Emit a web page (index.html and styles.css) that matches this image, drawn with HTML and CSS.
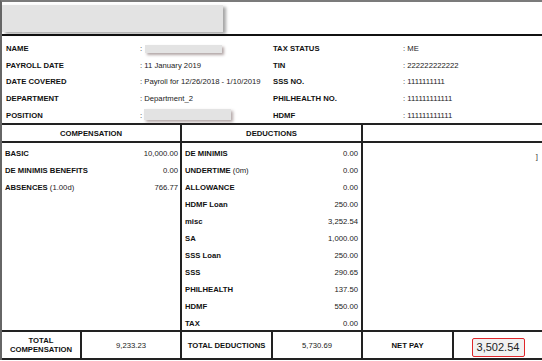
FILE: index.html
```html
<!DOCTYPE html>
<html>
<head>
<meta charset="utf-8">
<link rel="stylesheet" href="styles.css">
</head>
<body>
<div class="slip">
  <div class="head"><div class="title-box"></div></div>
  <div class="info">
    <div class="lbl">NAME</div><div class="val">: <span class="redact r-name"></span></div>
    <div class="lbl">TAX STATUS</div><div class="val">: ME</div>
    <div class="lbl">PAYROLL DATE</div><div class="val">: 11 January 2019</div>
    <div class="lbl">TIN</div><div class="val">: 222222222222</div>
    <div class="lbl">DATE COVERED</div><div class="val">: Payroll for 12/26/2018 - 1/10/2019</div>
    <div class="lbl">SSS NO.</div><div class="val">: 1111111111</div>
    <div class="lbl">DEPARTMENT</div><div class="val">: Department_2</div>
    <div class="lbl">PHILHEALTH NO.</div><div class="val">: 111111111111</div>
    <div class="lbl">POSITION</div><div class="val">: <span class="redact r-pos"></span></div>
    <div class="lbl">HDMF</div><div class="val">: 111111111111</div>
  </div>
  <div class="ledger">
    <div class="cols">
      <div class="hcell">COMPENSATION</div>
      <div class="hcell">DEDUCTIONS</div>
      <div class="hcell"></div>
      <div class="body comp">
        <div class="row"><span class="k">BASIC</span><span class="v">10,000.00</span></div>
        <div class="row"><span class="k">DE MINIMIS BENEFITS</span><span class="v">0.00</span></div>
        <div class="row"><span class="k">ABSENCES <span class="n">(1.00d)</span></span><span class="v">766.77</span></div>
      </div>
      <div class="body ded">
        <div class="row"><span class="k">DE MINIMIS</span><span class="v">0.00</span></div>
        <div class="row"><span class="k">UNDERTIME <span class="n">(0m)</span></span><span class="v">0.00</span></div>
        <div class="row"><span class="k">ALLOWANCE</span><span class="v">0.00</span></div>
        <div class="row"><span class="k">HDMF Loan</span><span class="v">250.00</span></div>
        <div class="row"><span class="k">misc</span><span class="v">3,252.54</span></div>
        <div class="row"><span class="k">SA</span><span class="v">1,000.00</span></div>
        <div class="row"><span class="k">SSS Loan</span><span class="v">250.00</span></div>
        <div class="row"><span class="k">SSS</span><span class="v">290.65</span></div>
        <div class="row"><span class="k">PHILHEALTH</span><span class="v">137.50</span></div>
        <div class="row"><span class="k">HDMF</span><span class="v">550.00</span></div>
        <div class="row"><span class="k">TAX</span><span class="v">0.00</span></div>
      </div>
      <div class="body extra"><div class="mark">]</div></div>
    </div>
    <div class="totals">
      <div class="tcell b two">TOTAL<br>COMPENSATION</div>
      <div class="tcell">9,233.23</div>
      <div class="tcell b">TOTAL DEDUCTIONS</div>
      <div class="tcell">5,730.69</div>
      <div class="tcell b">NET PAY</div>
      <div class="tcell net"><div class="netbox">3,502.54</div></div>
    </div>
  </div>
</div>
</body>
</html>
```
FILE: styles.css
```css
* { box-sizing: border-box; }
body {
  margin: 0;
  background: #fff;
  font-family: "Liberation Sans", Arial, sans-serif;
  font-size: 7.7px;
  color: #222;
}
.slip {
  width: 542px;
  border-top: 2px solid #7b7b7b;
  border-left: 2px solid #666;
}
.head {
  height: 34px;
  padding-top: 3px;
  border-bottom: 2px solid #111;
}
.title-box {
  width: 221px;
  height: 27px;
  background: #e3e3e3;
  box-shadow: 3px 2px 3px rgba(0, 0, 0, 0.35);
}
.info {
  height: 87px;
  padding: 4px 0 0 4px;
  display: grid;
  grid-template-columns: 134px 133px 130px 1fr;
  grid-auto-rows: 16.8px;
  align-items: center;
}
.lbl { font-weight: bold; color: #111; }
.val { color: #222; white-space: nowrap; }
.redact {
  display: inline-block;
  vertical-align: middle;
  background: #e3e3e3;
  box-shadow: 2px 2px 3px rgba(60, 30, 30, 0.4);
}
.r-name { width: 77px; height: 8px; margin-left: 1px; }
.r-pos { width: 87px; height: 11px; margin-top: -4px; }
.ledger {
  background: #222;
  display: flex;
  flex-direction: column;
  gap: 2px;
  padding: 2px 0;
}
.cols {
  display: grid;
  grid-template-columns: 178px 179px 1fr;
  grid-template-rows: 16px 187px;
  gap: 2px;
}
.hcell {
  background: #fff;
  font-weight: bold;
  color: #111;
  display: flex;
  align-items: center;
  justify-content: center;
  padding-top: 1px;
}
.body { background: #fff; }
.comp { padding: 1.5px 2px 0 3px; }
.ded { padding: 1.5px 3px 0 3px; }
.row {
  height: 17px;
  display: flex;
  align-items: center;
  justify-content: space-between;
}
.k { font-weight: bold; color: #111; }
.n { font-weight: normal; color: #222; }
.v { color: #222; }
.extra { padding: 9px 4px 0 0; }
.mark { text-align: right; color: #333; line-height: 10px; }
.totals {
  display: grid;
  grid-template-columns: 78px 98px 89px 88px 89px 1fr;
  height: 26px;
  gap: 2px;
}
.tcell {
  background: #fff;
  display: flex;
  align-items: center;
  justify-content: center;
  text-align: center;
  color: #222;
  white-space: nowrap;
}
.tcell.b { font-weight: bold; color: #111; }
.two { line-height: 9.5px; }
.net {
  align-items: flex-end;
  padding-bottom: 1px;
}
.netbox {
  width: 53px;
  height: 19px;
  border: 1.5px solid #e0262a;
  border-radius: 2px;
  background: #f1f1f1;
  font-size: 11px;
  line-height: 16px;
  text-align: center;
  color: #222;
}
```
